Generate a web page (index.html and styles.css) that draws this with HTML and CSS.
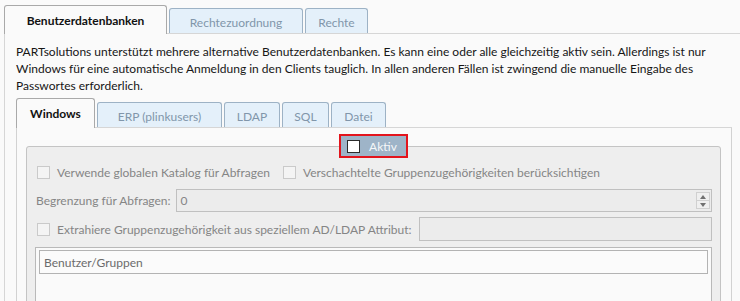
FILE: index.html
```html
<!DOCTYPE html>
<html lang="de">
<head>
  <meta charset="UTF-8" />
  <title>Benutzerdatenbanken</title>
  <link rel="stylesheet" href="styles.css">
</head>
<body>
  <div class="tabview outer">
    <div class="tab-strip">
      <div class="tab active w-benutzer">Benutzerdatenbanken</div>
      <div class="tab w-rechtezu">Rechtezuordnung</div>
      <div class="tab w-rechte">Rechte</div>
    </div>

    <div class="tab-panel outer-panel">
      <p class="intro">PARTsolutions unterstützt mehrere alternative Benutzerdatenbanken. Es kann eine oder alle gleichzeitig aktiv sein. Allerdings ist nur Windows für eine automatische Anmeldung in den Clients tauglich. In allen anderen Fällen ist zwingend die manuelle Eingabe des Passwortes erforderlich.</p>

      <div class="tabview inner">
        <div class="tab-strip">
          <div class="tab active w-windows">Windows</div>
          <div class="tab w-erp">ERP (plinkusers)</div>
          <div class="tab w-ldap">LDAP</div>
          <div class="tab w-sql">SQL</div>
          <div class="tab w-datei">Datei</div>
        </div>

        <div class="tab-panel inner-panel">
          <fieldset class="group">
            <legend class="group-title"><span class="check check-light"></span>Aktiv</legend>

            <!-- Optionen -->
            <div class="row row-options">
              <label class="check-label"><span class="check"></span>Verwende globalen Katalog für Abfragen</label>
              <label class="check-label"><span class="check"></span>Verschachtelte Gruppenzugehörigkeiten berücksichtigen</label>
            </div>

            <!-- Begrenzung -->
            <div class="row row-field">
              <span class="field-label">Begrenzung für Abfragen:</span>
              <div class="field">
                <span class="field-value">0</span>
                <span class="spinner">
                  <span class="spin-btn"><span class="arrow-up"></span></span>
                  <span class="spin-btn"><span class="arrow-down"></span></span>
                </span>
              </div>
            </div>

            <!-- Attribut -->
            <div class="row row-field row-attr">
              <label class="check-label"><span class="check"></span>Extrahiere Gruppenzugehörigkeit aus speziellem AD/LDAP Attribut:</label>
              <div class="field"></div>
            </div>

            <div class="listbox">
              <div class="list-header">Benutzer/Gruppen</div>
            </div>
          </fieldset>
        </div>
      </div>
    </div>
  </div>
</body>
</html>
```

FILE: styles.css
```css
:root {
  --page-bg: #fafafa;
  --text-color: #161616;
  --muted: #858585;
  --tab-border: #a9a9a9;
  --tab-blue: #e4f0fa;
  --tab-blue-border: #9db2c5;
  --tab-blue-text: #8196aa;
  --line: #d6d6d6;
  --group-bg: #eeeeee;
  --group-border: #c4c4c4;
}

html, body {
  margin: 0;
  height: 301px;
  overflow: hidden;
}

body {
  font-family: Lato, "Open Sans", sans-serif;
  font-size: 12px;
  line-height: 17px;
  background: var(--page-bg);
  color: var(--text-color);
}

/* Tabs */

.outer {
  padding: 5px 0 0 4px;
}

.tab-strip {
  display: flex;
  align-items: flex-end;
  gap: 2px;
  border-bottom: 1px solid var(--line);
}

.outer > .tab-strip {
  height: 28px;
}

.inner > .tab-strip {
  height: 29px;
}

.tab {
  box-sizing: border-box;
  display: flex;
  justify-content: center;
  align-items: center;
  height: 25px;
  padding-top: 3px;
  background: var(--tab-blue);
  color: var(--tab-blue-text);
  border: 1px solid var(--tab-blue-border);
  border-bottom: none;
  border-radius: 3px 3px 0 0;
}

.tab.active {
  height: 29px;
  padding-top: 0;
  margin-bottom: -1px;
  background: var(--page-bg);
  color: #111;
  font-weight: 700;
  border-color: var(--tab-border);
}

.inner .tab {
  padding-top: 2px;
}

.inner .tab.active {
  height: 30px;
  padding-top: 0;
}

.w-benutzer { width: 163px; }
.w-rechtezu { width: 134px; }
.w-rechte { width: 63px; }
.w-windows { width: 79px; }
.w-erp { width: 125px; }
.w-ldap { width: 56px; }
.w-sql { width: 47px; }
.w-datei { width: 55px; }

/* Panels */

.outer-panel {
  border-left: 1px solid var(--line);
  padding: 9px 8px 0 11px;
}

.intro {
  margin: 0;
}

.inner {
  margin-top: 4px;
}

.inner-panel {
  border-left: 1px solid #d2d2d2;
  border-right: 1px solid #d2d2d2;
  padding: 6px 10px 0 9px;
  height: 200px;
}

/* Gruppe */

fieldset.group {
  margin: 0;
  padding: 4px 8px 0 8px;
  background: var(--group-bg);
  border: 1px solid var(--group-border);
  border-radius: 3px;
  color: var(--muted);
  min-height: 180px;
}

legend.group-title {
  box-sizing: border-box;
  display: flex;
  align-items: center;
  gap: 9px;
  height: 24px;
  margin: 0 auto;
  padding: 0 9px 0 6px;
  background: #9eb4c8;
  border: 2px solid #e3141c;
  color: #f5f7f9;
}

.row {
  display: flex;
  align-items: center;
}

.row-options {
  height: 20px;
  gap: 13px;
  padding-left: 2px;
}

.row-field {
  margin-top: 7px;
  height: 23px;
  gap: 5px;
}

.row-attr {
  margin-top: 5px;
  height: 24px;
  gap: 7px;
  padding-left: 2px;
}

.check-label {
  display: flex;
  align-items: center;
  gap: 7px;
  white-space: nowrap;
}

.check {
  box-sizing: border-box;
  width: 13px;
  height: 13px;
  background: #f4f4f4;
  border: 1px solid #cacaca;
}

.check-light {
  background: #fff;
  border-color: #2b2b2b;
}

.field-label {
  padding-left: 1px;
  white-space: nowrap;
}

.field {
  box-sizing: border-box;
  flex: 1;
  height: 100%;
  display: flex;
  align-items: center;
  padding: 0 1px 0 4px;
  background: #ececec;
  border: 1px solid #c0c0c0;
}

.field-value {
  flex: 1;
}

.spinner {
  display: flex;
  flex-direction: column;
  width: 14px;
}

.spin-btn {
  box-sizing: border-box;
  height: 9px;
  display: flex;
  justify-content: center;
  align-items: center;
  border: 1px solid #d0d0d0;
  background: #efefef;
}

.spin-btn + .spin-btn {
  border-top: none;
  height: 8px;
}

.arrow-up,
.arrow-down {
  width: 0;
  height: 0;
  border-left: 3px solid transparent;
  border-right: 3px solid transparent;
}

.arrow-up {
  border-bottom: 4px solid #707070;
}

.arrow-down {
  border-top: 4px solid #707070;
}

/* Liste */

.listbox {
  margin-top: 6px;
  height: 90px;
  padding: 2px 3px;
  background: #fafafa;
  border: 1px solid #b9b9b9;
}

.list-header {
  box-sizing: border-box;
  height: 24px;
  display: flex;
  align-items: center;
  padding-left: 4px;
  color: #6b6b6b;
  border: 1px solid #b3b3b3;
  background: #fbfbfb;
}
```
